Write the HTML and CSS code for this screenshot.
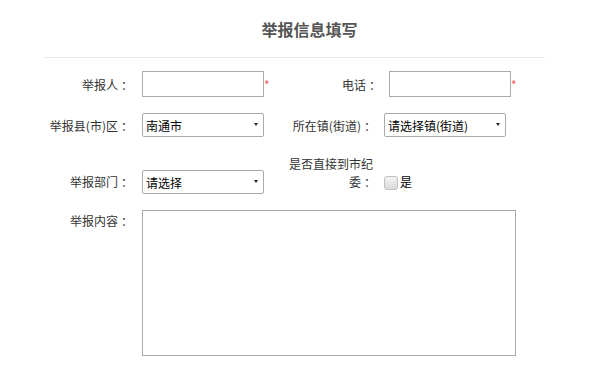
FILE: index.html
```html
<!DOCTYPE html>
<html lang="zh-CN">
<head>
<meta charset="utf-8">
<title>举报信息填写</title>
<link rel="stylesheet" href="styles.css">
</head>
<body>
<div class="report">
  <h2 class="title">举报信息填写</h2>
  <form class="form">
    <div class="row row-1">
      <label class="lbl">举报人<span class="colon">：</span></label>
      <input class="txt" type="text">
      <span class="req">*</span>
      <label class="lbl2">电话<span class="colon">：</span></label>
      <input class="txt" type="text">
      <span class="req">*</span>
    </div>
    <div class="row row-2">
      <label class="lbl">举报县(市)区<span class="colon">：</span></label>
      <span class="selwrap"><select class="sel"><option>南通市</option></select></span>
      <label class="lbl2">所在镇(街道)<span class="colon">：</span></label>
      <span class="selwrap"><select class="sel"><option>请选择镇(街道)</option></select></span>
    </div>
    <div class="row row-3">
      <label class="lbl">举报部门<span class="colon">：</span></label>
      <span class="selwrap"><select class="sel"><option>请选择</option></select></span>
      <label class="lbl2">是否直接到市纪委<span class="colon">：</span></label>
      <input class="chk" type="checkbox">
      <span class="chk-text">是</span>
    </div>
    <div class="row row-4">
      <label class="lbl">举报内容<span class="colon">：</span></label>
      <textarea class="area"></textarea>
    </div>
  </form>
</div>
</body>
</html>
```
FILE: styles.css
```css
body {
  margin: 0;
  background: #fff;
  color: #333;
  font-family: "Noto Sans CJK SC", "Noto Sans", sans-serif;
  font-size: 12px;
}

.report {
  margin-left: 44px;
  width: 501px;
}

.title {
  margin: 0;
  padding: 19px 0 18px 30px;
  font-size: 16px;
  line-height: 20px;
  font-weight: bold;
  color: #555;
  text-align: center;
  border-bottom: 1px solid #e8e8e8;
}

.form {
  margin: 0;
}

.row {
  display: flex;
  align-items: flex-start;
}

/* centre the full-width colon's dots inside its 12px cell */
.colon {
  padding-left: 3px;
  margin-right: -3px;
}

.lbl {
  width: 86px;
  margin-right: 12px;
  text-align: right;
  line-height: 18px;
  flex: none;
}

.lbl2 {
  width: 90px;
  margin-left: 19px;
  margin-right: 11px;
  text-align: right;
  line-height: 18px;
  flex: none;
}

.req {
  width: 5px;
  color: #f55;
  line-height: 18px;
  flex: none;
  overflow: visible;
  white-space: nowrap;
}

.txt {
  box-sizing: border-box;
  width: 122px;
  height: 26px;
  margin: 0;
  padding: 0 3px;
  border: 1px solid #a9a9a9;
  font: inherit;
  background: #fff;
  flex: none;
}

.selwrap {
  position: relative;
  display: block;
  width: 122px;
  height: 24px;
  flex: none;
}

.selwrap::after {
  content: "";
  position: absolute;
  right: 6px;
  top: 10px;
  border-left: 2px solid transparent;
  border-right: 2px solid transparent;
  border-top: 3px solid #222;
  pointer-events: none;
}

.sel {
  -webkit-appearance: none;
  appearance: none;
  box-sizing: border-box;
  display: block;
  width: 122px;
  height: 24px;
  margin: 0;
  padding: 0 0 0 3px;
  border: 1px solid #a9a9a9;
  border-radius: 2px;
  background: #fff;
  color: #000;
  font: inherit;
  outline: none;
}

.chk {
  -webkit-appearance: none;
  appearance: none;
  box-sizing: border-box;
  width: 14px;
  height: 14px;
  margin: 0 2px 0 0;
  border: 1px solid #c0c0c0;
  border-radius: 3px;
  background: linear-gradient(#f3f3f3, #dadada);
  flex: none;
}

.chk-text {
  line-height: 18px;
  color: #000;
}

.area {
  box-sizing: border-box;
  width: 374px;
  height: 146px;
  margin: 0;
  border: 1px solid #a9a9a9;
  resize: none;
  font: inherit;
  flex: none;
}

/* row vertical rhythm */
.row-1 { margin-top: 13px; }
.row-1 .lbl,
.row-1 .lbl2,
.row-1 .req { margin-top: 5px; }

.row-2 { margin-top: 16px; }
.row-2 .lbl,
.row-2 .lbl2 { margin-top: 4px; }

.row-3 { margin-top: 18px; }
.row-3 .lbl { margin-top: 18px; }
.row-3 .selwrap { margin-top: 15px; }
.row-3 .chk { margin-top: 21px; }
.row-3 .chk-text { margin-top: 18px; }

.row-4 { margin-top: 16px; }
.row-4 .lbl { margin-top: 2px; }
```
